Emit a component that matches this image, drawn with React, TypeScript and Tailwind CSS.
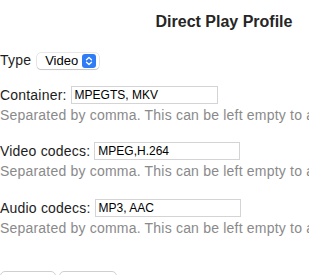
import React, { useState } from 'react';

const font = { fontFamily: '"Liberation Sans", Arial, sans-serif' };

const Stepper = () => (
    <span className="flex h-[14px] w-[14px] items-center justify-center rounded-[3px] bg-[#2f7cf6]">
        <svg width="8" height="10" viewBox="0 0 8 10" fill="none">
            <path d="M1.5 3.8 4 1.5l2.5 2.3M1.5 6.2 4 8.5l2.5-2.3" stroke="white" strokeWidth="1.3" strokeLinecap="round" strokeLinejoin="round" />
        </svg>
    </span>
);

interface FieldProps {
    label: string;
    value: string;
    inputWidth: string;
    className?: string;
}

const Field: React.FC<FieldProps> = ({ label, value, inputWidth, className = '' }) => {
    const [text, setText] = useState(value);
    return (
        <div className={className}>
            <div className="flex h-5 items-center whitespace-nowrap">
                <span className="text-[14px] tracking-[0.2px] text-[#1d1d1d]">{label}</span>
                <input
                    value={text}
                    onChange={(e) => setText(e.target.value)}
                    className={`ml-[4px] h-[18px] ${inputWidth} border border-[#d4d4d4] bg-white px-[3px] text-[12px] text-black outline-none`}
                    style={font}
                />
            </div>
            <div className="h-5 whitespace-nowrap text-[14px] leading-5 tracking-[0.2px] text-[#8a8a8a]">
                Separated by comma. This can be left empty to apply to all containers.
            </div>
        </div>
    );
};

export default function App() {
    return (
        <div className="h-[275px] w-[309px] overflow-hidden bg-white" style={font}>
            <div className="w-[448px]">
                <h1 className="pt-[10px] text-center text-[16px] font-bold leading-6 text-[#262626]">
                    Direct Play Profile
                </h1>

                <div className="mt-[16px] flex h-5 items-center text-[14px] tracking-[0.2px] text-[#1d1d1d]">
                    <span>Type</span>
                    <div className="ml-[6px] mt-[2px] flex h-[16px] w-[62px] items-center justify-between rounded-[4px] bg-white pl-[8px] pr-[3px] shadow-[0_0_0_0.5px_rgba(0,0,0,0.18),0_1px_1px_rgba(0,0,0,0.15)]">
                        <span className="text-[13px] tracking-normal text-black">Video</span>
                        <Stepper />
                    </div>
                </div>

                <Field label="Container:" value="MPEGTS, MKV" inputWidth="w-[147px]" className="mt-[15px]" />
                <Field label="Video codecs:" value="MPEG,H.264" inputWidth="w-[146px]" className="mt-4" />
                <Field label="Audio codecs:" value="MP3, AAC" inputWidth="w-[146px]" className="mt-[17px]" />

                <div className="mt-[33px] flex gap-[3px]">
                    <button className="h-[22px] rounded-[5px] border border-[#cfcfcf] bg-white px-[12px] text-[13px] text-black">Save</button>
                    <button className="h-[22px] rounded-[5px] border border-[#cfcfcf] bg-white px-[8px] text-[13px] text-black">Cancel</button>
                </div>
            </div>
        </div>
    );
}
